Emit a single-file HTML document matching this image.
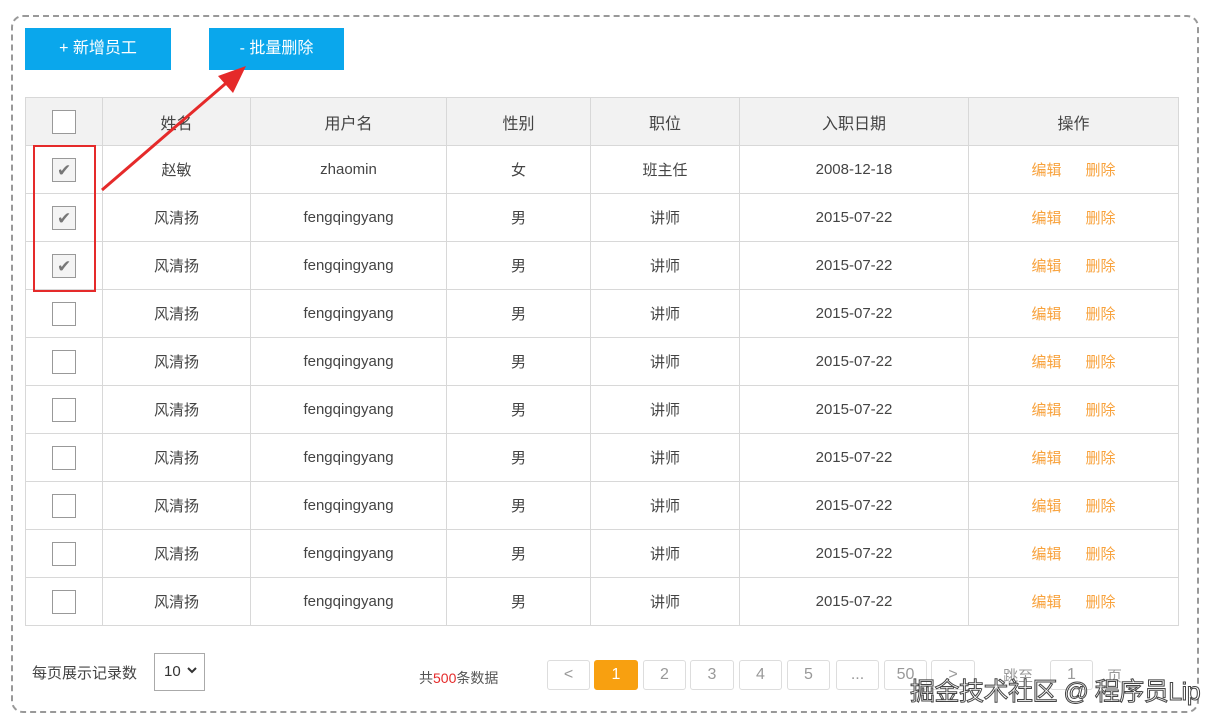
<!DOCTYPE html>
<html><head><meta charset="utf-8"><style>
*{margin:0;padding:0;box-sizing:border-box}
body{width:1227px;height:723px;background:#fff;position:relative;overflow:hidden;font-family:"Liberation Sans","Noto Sans CJK SC",sans-serif;color:#333}
.frame{position:absolute;left:11px;top:15px;width:1188px;height:698px;border:2px dashed #999;border-radius:12px}
.btn{position:absolute;top:28px;height:42px;background:#0aa7ec;color:#fff;font-size:16px;line-height:42px;text-align:center}
table{position:absolute;left:25px;top:97px;border-collapse:collapse;font-size:15px}
td,th{border:1px solid #d8d8d8;height:48px;text-align:center;font-weight:normal;color:#444}
th{background:#f2f2f2;font-size:16px}
.cb{display:inline-block;width:24px;height:24px;border:1px solid #999;vertical-align:middle;background:#fff;position:relative}
.cb.on{background:#f4f4f4}
.cb.on::after{content:"✔";position:absolute;left:4px;top:1px;font-size:17px;color:#777;line-height:22px}
.op{color:#f8a23c;margin:0 12px}
.pg{position:absolute;top:660px;height:30px;border:1px solid #ddd;border-radius:3px;text-align:center;line-height:28px;color:#999;font-size:16px}
</style></head><body>
<div class="frame"></div>
<div class="btn" style="left:25px;width:146px">+ 新增员工</div>
<div class="btn" style="left:209px;width:135px">- 批量删除</div>
<table>
<tr><th style="width:77px"><span class="cb"></span></th><th style="width:148px">姓名</th><th style="width:196px">用户名</th><th style="width:144px">性别</th><th style="width:149px">职位</th><th style="width:229px">入职日期</th><th style="width:210px">操作</th></tr>
<tr><td><span class="cb on"></span></td><td>赵敏</td><td>zhaomin</td><td>女</td><td>班主任</td><td>2008-12-18</td><td><span class="op">编辑</span><span class="op">删除</span></td></tr>
<tr><td><span class="cb on"></span></td><td>风清扬</td><td>fengqingyang</td><td>男</td><td>讲师</td><td>2015-07-22</td><td><span class="op">编辑</span><span class="op">删除</span></td></tr>
<tr><td><span class="cb on"></span></td><td>风清扬</td><td>fengqingyang</td><td>男</td><td>讲师</td><td>2015-07-22</td><td><span class="op">编辑</span><span class="op">删除</span></td></tr>
<tr><td><span class="cb"></span></td><td>风清扬</td><td>fengqingyang</td><td>男</td><td>讲师</td><td>2015-07-22</td><td><span class="op">编辑</span><span class="op">删除</span></td></tr>
<tr><td><span class="cb"></span></td><td>风清扬</td><td>fengqingyang</td><td>男</td><td>讲师</td><td>2015-07-22</td><td><span class="op">编辑</span><span class="op">删除</span></td></tr>
<tr><td><span class="cb"></span></td><td>风清扬</td><td>fengqingyang</td><td>男</td><td>讲师</td><td>2015-07-22</td><td><span class="op">编辑</span><span class="op">删除</span></td></tr>
<tr><td><span class="cb"></span></td><td>风清扬</td><td>fengqingyang</td><td>男</td><td>讲师</td><td>2015-07-22</td><td><span class="op">编辑</span><span class="op">删除</span></td></tr>
<tr><td><span class="cb"></span></td><td>风清扬</td><td>fengqingyang</td><td>男</td><td>讲师</td><td>2015-07-22</td><td><span class="op">编辑</span><span class="op">删除</span></td></tr>
<tr><td><span class="cb"></span></td><td>风清扬</td><td>fengqingyang</td><td>男</td><td>讲师</td><td>2015-07-22</td><td><span class="op">编辑</span><span class="op">删除</span></td></tr>
<tr><td><span class="cb"></span></td><td>风清扬</td><td>fengqingyang</td><td>男</td><td>讲师</td><td>2015-07-22</td><td><span class="op">编辑</span><span class="op">删除</span></td></tr>
</table>
<div style="position:absolute;left:33px;top:145px;width:63px;height:147px;border:2px solid #e52a2a"></div>
<svg style="position:absolute;left:0;top:0" width="1227" height="723"><line x1="102" y1="190" x2="232" y2="78" stroke="#e52a2a" stroke-width="3"/><polygon points="246,66 218,76 233,93" fill="#e52a2a"/><polyline points="188,668 192,672 196,668" fill="none" stroke="#333" stroke-width="2"/></svg>
<div style="position:absolute;left:32px;top:662px;font-size:15px;color:#444">每页展示记录数</div>
<div style="position:absolute;left:154px;top:653px;width:51px;height:38px;border:1px solid #aaa;font-size:15px;line-height:36px;padding-left:9px;color:#333">10</div>
<div style="position:absolute;left:419px;top:668px;font-size:14px;color:#555">共<span style="color:#e52a2a">500</span>条数据</div>
<div class="pg" style="left:547px;width:43px">&lt;</div>
<div class="pg" style="left:594px;width:44px;background:#f8a010;border-color:#f8a010;color:#fff">1</div>
<div class="pg" style="left:643px;width:43px">2</div>
<div class="pg" style="left:690px;width:44px">3</div>
<div class="pg" style="left:739px;width:43px">4</div>
<div class="pg" style="left:787px;width:43px">5</div>
<div class="pg" style="left:836px;width:43px">...</div>
<div class="pg" style="left:884px;width:43px">50</div>
<div class="pg" style="left:931px;width:44px">&gt;</div>
<div style="position:absolute;left:1003px;top:665px;font-size:15px;color:#999">跳至</div>
<div class="pg" style="left:1050px;width:43px">1</div>
<div style="position:absolute;left:1107px;top:665px;font-size:15px;color:#999">页</div>
<div style="position:absolute;left:910px;top:672px;font-size:25px;color:#fff;-webkit-text-stroke:1px #444;white-space:nowrap;letter-spacing:-0.5px">掘金技术社区 @ 程序员Lip</div>
</body></html>
